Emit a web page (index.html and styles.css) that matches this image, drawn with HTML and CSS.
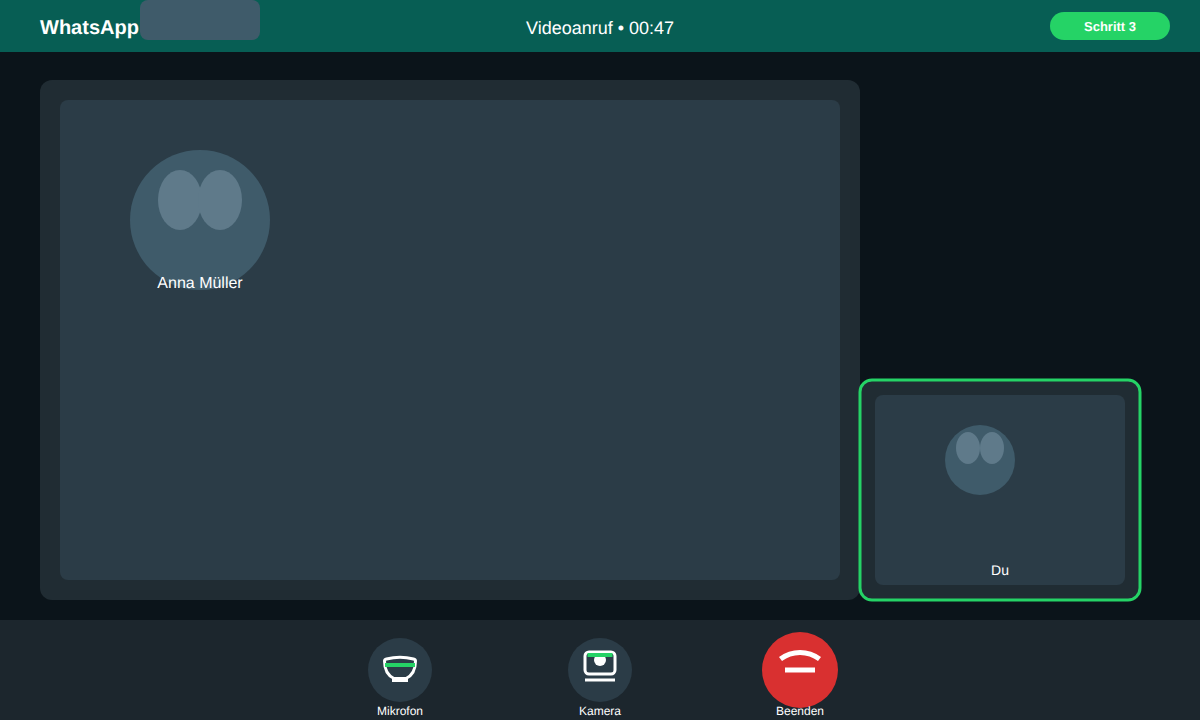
FILE: index.html
```html
<!DOCTYPE html>
<html lang="de">
<head>
    <meta charset="UTF-8">
    <meta name="viewport" content="width=device-width, initial-scale=1.0">
    <title>WhatsApp Videoanruf</title>
    <link rel="stylesheet" href="styles.css">
</head>
<body>
    <header class="topbar">
        <div class="brand">WhatsApp</div>
        <div class="call-title">Videoanruf • 00:47</div>
        <div class="step-wrap"><span class="step">Schritt 3</span></div>
        <div class="blur-box"></div>
    </header>

    <main class="stage">
        <section class="remote-card">
            <div class="remote-video">
                <div class="avatar-large">
                    <svg width="140" height="140" viewBox="0 0 140 140">
                        <circle cx="70" cy="70" r="70" fill="#3f5b6a"/>
                        <ellipse cx="50" cy="50" rx="22" ry="30" fill="#5f7a8a"/>
                        <ellipse cx="90" cy="50" rx="22" ry="30" fill="#5f7a8a"/>
                    </svg>
                    <span class="remote-name">Anna Müller</span>
                </div>
            </div>
        </section>

        <section class="self-card">
            <div class="self-video">
                <svg class="avatar-small" width="70" height="70" viewBox="0 0 70 70">
                    <circle cx="35" cy="35" r="35" fill="#3f5b6a"/>
                    <ellipse cx="23" cy="23" rx="12" ry="16" fill="#5f7a8a"/>
                    <ellipse cx="47" cy="23" rx="12" ry="16" fill="#5f7a8a"/>
                </svg>
                <span class="self-name">Du</span>
            </div>
            <svg class="self-ring" width="284" height="224" viewBox="0 0 284 224">
                <rect x="2" y="2" width="280" height="220" rx="12" fill="none" stroke="#25d366" stroke-width="3"/>
            </svg>
        </section>
    </main>

    <footer class="controls">
        <div class="control">
            <button class="round-btn" type="button">
                <svg width="64" height="64" viewBox="0 0 64 64" fill="none" stroke="#fff" stroke-width="3">
                    <path d="M16.5 23 Q16.5 21.5 18.5 21 Q32 17.5 45.5 21 Q47.5 21.5 47.5 23 Q47.5 36 38 40.5 H26 Q16.5 36 16.5 23 Z"/>
                    <path d="M24 42.5 H40"/>
                    <rect x="17" y="25" width="30" height="4" fill="#25d366" stroke="none"/>
                </svg>
            </button>
            <span class="control-label">Mikrofon</span>
        </div>
        <div class="control">
            <button class="round-btn" type="button">
                <svg width="64" height="64" viewBox="0 0 64 64" fill="none" stroke="#fff" stroke-width="3">
                    <rect x="17" y="14" width="30" height="22" rx="4"/>
                    <circle cx="32" cy="22" r="6" fill="#fff" stroke="none"/>
                    <rect x="19.5" y="15" width="25" height="4" fill="#25d366" stroke="none"/>
                    <path d="M17 42 H47"/>
                </svg>
            </button>
            <span class="control-label">Kamera</span>
        </div>
        <div class="control">
            <button class="round-btn end-btn" type="button">
                <svg width="76" height="76" viewBox="0 0 76 76" fill="none" stroke="#fff" stroke-width="5">
                    <path d="M18.5 27 A32.5 32.5 0 0 1 57.5 27"/>
                    <path d="M23 38 H53"/>
                </svg>
            </button>
            <span class="control-label">Beenden</span>
        </div>
    </footer>
</body>
</html>
```

FILE: styles.css
```css
* {
    box-sizing: border-box;
}

body {
    font-family: "Liberation Sans", Arial, sans-serif;
    text-rendering: geometricPrecision;
    margin: 0;
    padding: 0;
    width: 1200px;
    height: 720px;
    overflow: hidden;
    display: flex;
    flex-direction: column;
    background-color: #0b141a;
    color: #fff;
}

/* top bar */
.topbar {
    position: relative;
    height: 52px;
    padding: 4px 30px 0;
    display: grid;
    grid-template-columns: 1fr auto 1fr;
    align-items: center;
    background-color: #075e54;
}

.brand {
    margin-left: 10px;
    font-size: 20px;
    font-weight: bold;
}

.call-title {
    font-size: 18px;
}

.step-wrap {
    display: flex;
    justify-content: flex-end;
    margin-top: -4px;
}

.step {
    width: 120px;
    height: 28px;
    line-height: 30px;
    text-align: center;
    border-radius: 14px;
    background-color: #25d366;
    font-size: 13px;
    font-weight: bold;
}

.blur-box {
    position: absolute;
    left: 140px;
    top: 0;
    width: 120px;
    height: 40px;
    border-radius: 8px;
    background-color: #3f5b6a;
}

/* video area */
.stage {
    flex: 1;
    padding: 28px 60px 20px 40px;
    display: flex;
    align-items: flex-end;
}

.remote-card {
    width: 820px;
    height: 520px;
    padding: 20px;
    border-radius: 12px;
    background-color: #202c33;
}

.remote-video {
    height: 100%;
    padding: 50px 70px;
    border-radius: 8px;
    background-color: #2b3c47;
}

.avatar-large {
    position: relative;
    width: 140px;
    height: 140px;
}

.avatar-large svg,
.avatar-small {
    display: block;
}

.remote-name {
    position: absolute;
    left: 0;
    right: 0;
    top: 125px;
    text-align: center;
    font-size: 16px;
    white-space: nowrap;
}

.self-card {
    position: relative;
    width: 280px;
    height: 220px;
    padding: 15px;
    border-radius: 12px;
    background-color: #202c33;
}

.self-ring {
    position: absolute;
    left: -2px;
    top: -2px;
}

.self-video {
    height: 100%;
    padding: 30px 0 7px 70px;
    display: flex;
    flex-direction: column;
    border-radius: 8px;
    background-color: #2b3c47;
}

.self-name {
    margin-top: auto;
    margin-left: -70px;
    text-align: center;
    font-size: 14px;
}

/* bottom controls */
.controls {
    height: 100px;
    display: flex;
    justify-content: center;
    background-color: #1c262d;
}

.control {
    width: 200px;
    padding-top: 18px;
    display: flex;
    flex-direction: column;
    align-items: center;
}

.round-btn {
    width: 64px;
    height: 64px;
    padding: 0;
    border: none;
    border-radius: 50%;
    background-color: #2b3c47;
    flex-shrink: 0;
}

.round-btn svg {
    display: block;
}

.end-btn {
    width: 76px;
    height: 76px;
    margin: -6px 0;
    background-color: #d93030;
}

.control-label {
    position: relative;
    margin-top: 2px;
    font-size: 12px;
    line-height: 14px;
}
```
